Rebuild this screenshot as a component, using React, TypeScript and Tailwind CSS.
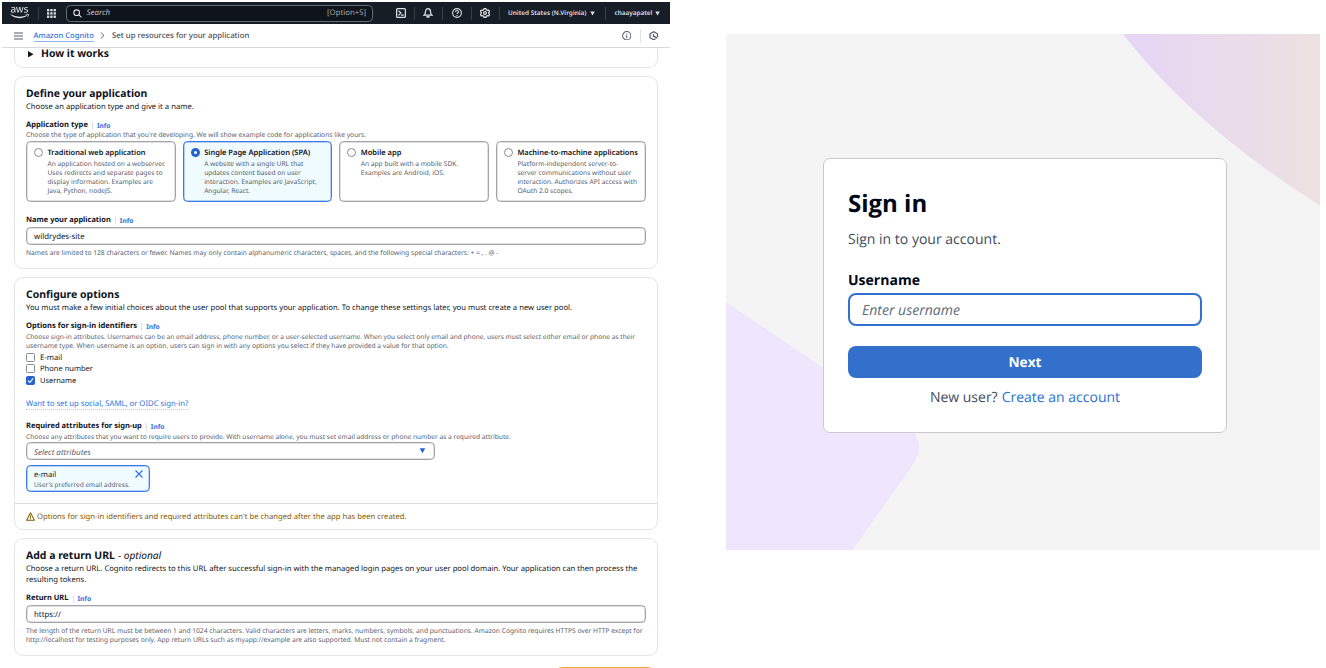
import type { ReactNode } from "react";
import { FaAws } from "react-icons/fa";

function Info() {
  return (
    <span className="ml-[4px] flex h-[8px] items-center border-l border-[#dedee3] pl-[4px] text-[6.6px] font-bold text-[#2b6fe0]">
      Info
    </span>
  );
}

function Label({ children, size = "text-[7.55px]" }: { children: ReactNode; size?: string }) {
  return (
    <div className={`flex h-[12px] items-center pt-[2px] font-bold text-[#10141c] ${size}`}>
      {children}
      <Info />
    </div>
  );
}

function Field({ children }: { children: ReactNode }) {
  return (
    <div className="flex h-[18px] w-full items-center rounded-[4.5px] border border-[#a3a3ac] pt-[4px] pl-[7px] text-[7.8px] text-[#10141c] shadow-[inset_0_0_0_0.5px_#c4c4ca]">
      {children}
    </div>
  );
}

const tiles = [
  {
    title: "Traditional web application",
    size: "text-[7.41px]",
    lines: ["An application hosted on a webserver.", "Uses redirects and separate pages to", "display information. Examples are", "Java, Python, nodeJS."],
  },
  {
    title: "Single Page Application (SPA)",
    size: "text-[7.52px]",
    selected: true,
    lines: ["A website with a single URL that", "updates content based on user", "interaction. Examples are JavaScript,", "Angular, React."],
  },
  {
    title: "Mobile app",
    size: "text-[7.5px]",
    lines: ["An app built with a mobile SDK.", "Examples are Android, iOS."],
  },
  {
    title: "Machine-to-machine applications",
    size: "text-[7.44px]",
    lines: ["Platform-independent server-to-", "server communications without user", "interaction. Authorizes API access with", "OAuth 2.0 scopes."],
  },
];

function Divider({ className }: { className: string }) {
  return <span className={`h-[13px] w-px shrink-0 bg-[#38404b] ${className}`} />;
}

function Caret({ className }: { className: string }) {
  return (
    <svg viewBox="0 0 10 9" className={className} fill="currentColor">
      <path d="M0.5 0.5h9L5 8.5z" />
    </svg>
  );
}

const ico = { fill: "none", stroke: "currentColor", strokeWidth: 2, viewBox: "0 0 16 16" } as const;

function TopNav() {
  return (
    <div className="flex h-[22px] shrink-0 items-center bg-[#161d26] text-[#dcdfe3]">
      <FaAws className="-mt-px ml-[8px] h-[15px] w-[19px] shrink-0" />
      <Divider className="ml-[8.5px]" />
      <svg viewBox="0 0 9 9" className="ml-[8.5px] h-[9px] w-[9px] shrink-0" fill="currentColor">
        {[0, 3.3, 6.6].map((y) => [0, 3.3, 6.6].map((x) => <rect key={`${x}-${y}`} x={x} y={y} width="2.3" height="2.3" />))}
      </svg>
      <div className="ml-[10px] flex h-[17px] w-[307px] shrink-0 items-center rounded-[4.5px] border border-[#646c77] bg-[#0f141a] pr-[6px] pl-[6px]">
        <svg {...ico} className="h-[9px] w-[9px]">
          <circle cx="6.5" cy="6.5" r="5" />
          <path d="M10 10l5 5" />
        </svg>
        <span className="ml-[4.5px] pt-[2px] text-[7.9px] text-[#c0c2c9] italic">Search</span>
        <span className="ml-auto pt-[2px] text-[7.77px] text-[#a5a8b0]">[Option+S]</span>
      </div>
      <svg {...ico} className="ml-[22.5px] h-[10px] w-[10px] shrink-0">
        <rect x="1" y="1" width="14" height="14" rx="1.5" />
        <path d="M4 4.5l4 3.5-4 3.5M8 11.5h4.5" />
      </svg>
      <Divider className="ml-[8px]" />
      <svg {...ico} className="ml-[8.5px] h-[10px] w-[10px] shrink-0">
        <path d="M1.5 11.5c2.200-1.600 2.500-3.300 2.500-5.500C4 3.400 5.600 1 8 1s4 2.400 4 5c0 2.200.3 3.900 2.500 5.500z" />
        <path d="M5.5 14h5" strokeWidth="3" />
      </svg>
      <Divider className="ml-[9px]" />
      <svg {...ico} className="ml-[8.5px] h-[10px] w-[10px] shrink-0" strokeWidth={1.8}>
        <circle cx="8" cy="8" r="7" />
        <path d="M5.600 6.300c0-3 4.800-3 4.800-.1C10.400 8 8 7.800 8 9.700M8 11v1.800" />
      </svg>
      <Divider className="ml-[9px]" />
      <svg {...ico} className="ml-[8.5px] h-[10px] w-[10px] shrink-0">
        <path d="M6.500 1h3l.6 2 2 .9 1.900-.5 1.300 2.300L14 7.200v1.600l1.300 1.500-1.300 2.300-1.900-.5-2 .9-.6 2h-3l-.6-2-2-.9-1.900.5-1.300-2.300L2 8.800V7.200L.7 5.700 2 3.400l1.900.5 2-.9z" />
        <circle cx="8" cy="8" r="2.300" />
      </svg>
      <Divider className="ml-[8.5px]" />
      <span className="ml-[8.5px] shrink-0 text-[6.41px] font-semibold whitespace-nowrap">United States (N.Virginia)</span>
      <Caret className="ml-[3.5px] h-[5px] w-[5px] shrink-0" />
      <Divider className="ml-[10px]" />
      <span className="ml-[8.5px] shrink-0 text-[6.41px] font-semibold">chaayapatel</span>
      <Caret className="ml-[3px] h-[5px] w-[5px] shrink-0" />
    </div>
  );
}

function Breadcrumb() {
  return (
    <div className="flex h-[24px] shrink-0 items-center border-b border-[#d9dade] text-[#555b66]">
      <svg viewBox="0 0 9 8" className="ml-[12px] h-[8px] w-[9px]" stroke="currentColor" strokeWidth="1.2">
        <path d="M0 1h9M0 4h9M0 7h9" />
      </svg>
      <span className="mt-[2px] ml-[10.5px] h-[11px] border-b border-[#8db2f0] text-[7.65px] leading-[11.5px] font-medium text-[#2b6fe0]">Amazon Cognito</span>
      <svg viewBox="0 0 5 8" className="ml-[6.5px] h-[7px] w-[5px]" fill="none" stroke="currentColor" strokeWidth="1.1">
        <path d="M0.6 0.5L4.2 4L0.6 7.5" />
      </svg>
      <span className="ml-[6.5px] pt-[3px] text-[7.82px] font-medium text-[#4a505c]">Set up resources for your application</span>
      <svg {...ico} className="ml-auto h-[9.5px] w-[9.5px]" strokeWidth={1.7}>
        <circle cx="8" cy="8" r="7" />
        <path d="M8 7v5M8 4v1.8" />
      </svg>
      <span className="ml-[8.5px] h-[14px] w-px bg-[#e3e4e8]" />
      <svg {...ico} className="mr-[12px] ml-[8px] h-[9.5px] w-[9.5px]" strokeWidth={2}>
        <path d="M14.3 10V4.700L8 1.200 1.700 4.700v6.600L8 14.800l3-1.700" />
        <path d="M7.5 5v3.500L14 12" />
      </svg>
    </div>
  );
}

const card = "mx-[12px] shrink-0 rounded-[9px] border border-[#e4e5e9] bg-white";
const heading = "flex items-center font-bold text-[#0f141a]";
const hint = "text-[6.68px] text-[#5b616e]";

function Checkbox({ label, size, checked }: { label: string; size: string; checked?: boolean }) {
  return (
    <div className="flex h-[11.5px] items-center">
      <span className={`flex h-[9px] w-[9px] items-center justify-center rounded-[1.5px] border ${checked ? "border-[#2563d0] bg-[#2563d0]" : "border-[#868b98] bg-white"}`}>
        {checked && (
          <svg viewBox="0 0 8 8" className="h-[7px] w-[7px]" fill="none" stroke="white" strokeWidth="1.3">
            <path d="M1 4.2L3.2 6.3L7 1.6" />
          </svg>
        )}
      </span>
      <span className={`ml-[5px] pt-[2px] text-[#10141c] ${size}`}>{label}</span>
    </div>
  );
}

function Console() {
  return (
    <div className="mt-[2px] ml-[2px] flex h-[666px] w-[668px] shrink-0 flex-col overflow-hidden bg-white font-['Noto_Sans',sans-serif] whitespace-nowrap">
      <TopNav />
      <Breadcrumb />
      <div className="mx-[12px] flex h-[20px] shrink-0 items-start rounded-b-[9px] border border-t-0 border-[#e4e5e9] pl-[13px]">
        <svg viewBox="0 0 6 7" className="mt-[2.5px] h-[6.5px] w-[5.5px]" fill="#0f141a">
          <path d="M0 0l6 3.5L0 7z" />
        </svg>
        <span className="ml-[7.5px] text-[10.42px] leading-[13px] font-bold text-[#0f141a]">How it works</span>
      </div>

      <div className={`${card} mt-[8px] h-[193px] pt-[10px] pr-[11.5px] pl-[11px]`}>
        <div className={`${heading} h-[13px] pt-[2px] text-[10.42px]`}>Define your application</div>
        <div className="flex h-[12px] items-center pt-[3px] text-[7.68px] text-[#10141c]">Choose an application type and give it a name.</div>
        <div className="mt-[6px] pt-px"><Label size="text-[7.59px]">Application type</Label></div>
        <div className={`${hint} flex h-[8px] items-center pt-px`}>
          Choose the type of application that you're developing. We will show example code for applications like yours.
        </div>
        <div className="mt-[2px] grid h-[61px] grid-cols-4 gap-[7px]">
          {tiles.map((t) => (
            <div
              key={t.title}
              className={`flex items-start rounded-[4.5px] border pt-[5px] pl-[7px] ${t.selected ? "border-[#3b79e4] bg-[#f0fbff] shadow-[inset_0_0_0_0.5px_#7ba6ee]" : "border-[#a3a3ac] shadow-[inset_0_0_0_0.5px_#c4c4ca]"}`}
            >
              <span className={`mt-px h-[9px] w-[9px] shrink-0 rounded-full bg-white ${t.selected ? "border-[3px] border-[#2563d0]" : "border border-[#868b98]"}`} />
              <div className="ml-[4.5px]">
                <div className={`h-[11px] leading-[13px] font-semibold text-[#10141c] ${t.size}`}>{t.title}</div>
                <div className="pt-[0.5px] text-[6.64px] leading-[9.1px] text-[#565c69]">
                  {t.lines.map((l) => (
                    <div key={l}>{l}</div>
                  ))}
                </div>
              </div>
            </div>
          ))}
        </div>
        <div className="mt-[12px] mb-px"><Label size="text-[7.46px]">Name your application</Label></div>
        <Field>wildrydes-site</Field>
        <div className={`${hint} mt-[3px] flex h-[9px] items-center pt-[2px]`}>
          Names are limited to 128 characters or fewer. Names may only contain alphanumeric characters, spaces, and the following special characters: + = , . @ -
        </div>
      </div>

      <div className={`${card} mt-[8px] h-[253px]`}>
        <div className="h-[225px] px-[11px] pt-[10px]">
          <div className={`${heading} h-[13px] pt-[2px] text-[10.46px]`}>Configure options</div>
          <div className="mt-px flex h-[12px] items-center pt-[2px] text-[7.69px] text-[#10141c]">
            You must make a few initial choices about the user pool that supports your application. To change these settings later, you must create a new user pool.
          </div>
          <div className="mt-[6px]"><Label size="text-[7.59px]">Options for sign-in identifiers</Label></div>
          <div className="text-[6.62px] leading-[9.3px] text-[#5b616e]">
            <div>Choose sign-in attributes. Usernames can be an email address, phone number, or a user-selected username. When you select only email and phone, users must select either email or phone as their</div>
            <div className="text-[6.66px]">username type. When username is an option, users can sign in with any options you select if they have provided a value for that option.</div>
          </div>
          <div className="mt-[1px]">
            <Checkbox label="E-mail" size="text-[7.7px]" />
            <Checkbox label="Phone number" size="text-[7.54px]" />
            <Checkbox label="Username" size="text-[7.45px]" checked />
          </div>
          <div className="mt-[11px] flex h-[12px] items-center pt-px">
            <span className="border-b border-dotted border-[#b8cdf5] pt-px text-[7.73px] leading-[10px] text-[#2b6fe0]">Want to set up social, SAML, or OIDC sign-in?</span>
          </div>
          <div className="mt-[11px]"><Label size="text-[7.51px]">Required attributes for sign-up</Label></div>
          <div className="flex h-[9px] items-center text-[6.62px] text-[#5b616e]">
            Choose any attributes that you want to require users to provide. With username alone, you must set email address or phone number as a required attribute.
          </div>
          <div className="mt-px flex h-[18px] w-[409px] items-center rounded-[4.5px] border border-[#a3a3ac] pr-[8px] pl-[7px] shadow-[inset_0_0_0_0.5px_#c4c4ca]">
            <span className="pt-[3px] text-[7.98px] text-[#5b616e] italic">Select attributes</span>
            <Caret className="ml-auto h-[5.5px] w-[7px] text-[#2563d0]" />
          </div>
          <div className="mt-[5px] flex h-[27px] w-[123.5px] items-start rounded-[4.5px] border border-[#3b79e4] bg-[#f0fbff] pr-[5.5px] pl-[7px] shadow-[inset_0_0_0_0.5px_#7ba6ee]">
            <div>
              <div className="mt-[4px] text-[7.7px] leading-[10px] text-[#10141c]">e-mail</div>
              <div className="text-[6.53px] leading-[9px] text-[#5b616e]">User's preferred email address.</div>
            </div>
            <svg viewBox="0 0 8 8" className="mt-[4px] ml-auto h-[8px] w-[8px]" stroke="#2b6fe0" strokeWidth="1.1">
              <path d="M0.5 0.5l7 7M7.5 0.5l-7 7" />
            </svg>
          </div>
        </div>
        <div className="flex h-[26px] items-center border-t border-[#dcdde2] pl-[11px] text-[#855900]">
          <svg {...ico} className="h-[9px] w-[9px]" strokeWidth={1.8}>
            <path d="M8 1.5L15 14.5H1z" strokeLinejoin="round" />
            <path d="M8 6v4M8 11.2v1.6" />
          </svg>
          <span className="ml-[2px] pt-[2px] text-[7.68px]">Options for sign-in identifiers and required attributes can't be changed after the app has been created.</span>
        </div>
      </div>

      <div className={`${card} mt-[8px] h-[118px] pt-[10px] pr-[11.5px] pl-[11px]`}>
        <div className="flex h-[12px] items-baseline text-[10.46px] leading-[13px] font-bold text-[#0f141a]">
          Add a return URL<span className="ml-[3px] text-[10.15px] font-normal italic">- optional</span>
        </div>
        <div className="mt-[2.5px] text-[7.68px] leading-[11.2px] text-[#10141c]">
          <div>Choose a return URL. Cognito redirects to this URL after successful sign-in with the managed login pages on your user pool domain. Your application can then process the</div>
          <div>resulting tokens.</div>
        </div>
        <div className="mt-[6px] mb-px"><Label size="text-[7.5px]">Return URL</Label></div>
        <Field>https://</Field>
        <div className="mt-[3px] text-[6.67px] leading-[9.3px] text-[#5b616e]">
          <div>The length of the return URL must be between 1 and 1024 characters. Valid characters are letters, marks, numbers, symbols, and punctuations. Amazon Cognito requires HTTPS over HTTP except for</div>
          <div>http://localhost for testing purposes only. App return URLs such as myapp://example are also supported. Must not contain a fragment.</div>
        </div>
      </div>
      <div className="mt-[11px] mr-[12px] h-[22px] w-[106px] shrink-0 self-end rounded-[11px] bg-[#f0a52e]" />
    </div>
  );
}

function SignIn() {
  return (
    <div className="relative mt-[34px] ml-[56px] h-[516px] w-[594px] shrink-0 bg-[#f4f4f4] pt-[124px] font-['Open_Sans',sans-serif]">
      <svg className="absolute inset-0" width="594" height="516" viewBox="0 0 594 516">
        <defs>
          <linearGradient id="blob" gradientUnits="userSpaceOnUse" x1="397" y1="0" x2="594" y2="0">
            <stop offset="0" stopColor="#e7d5f6" />
            <stop offset="1" stopColor="#ede1e0" />
          </linearGradient>
        </defs>
        <path d="M397 0Q469 93 594 171.5V0z" fill="url(#blob)" />
        <path d="M0 268L97.6 334L172 384C191 397 199 411 188 429L126.6 516H0z" fill="#efe5fd" />
      </svg>
      <div className="relative ml-[97px] h-[275px] w-[404px] rounded-[7px] border border-[#c8cacd] bg-white px-[24px] pt-[26px] whitespace-nowrap">
        <div className="flex h-[36px] items-center pt-[2px] text-[24px] font-bold text-[#000716]">Sign in</div>
        <div className="mt-[7px] flex h-[22px] items-center pt-px text-[14.03px] text-[#414d5c]">Sign in to your account.</div>
        <div className="mt-[20px] flex h-[20px] items-center pt-px text-[14.03px] font-bold text-[#000716]">Username</div>
        <div className="mt-[3px] flex h-[33px] items-center rounded-[8px] border-2 border-[#3271cf] pt-[2px] pl-[12px] text-[14.03px] text-[#5f6b7a] italic">Enter username</div>
        <div className="mt-[20px] flex h-[32px] items-center justify-center rounded-[8px] bg-[#3270cb] pt-[2px] text-[13.7px] font-bold text-white">Next</div>
        <div className="mt-[8.5px] flex h-[22px] items-center justify-center gap-[4px] text-[14px] text-[#414d5c]">
          New user? <span className="text-[#2b6fd0]">Create an account</span>
        </div>
      </div>
    </div>
  );
}

export default function App() {
  return (
    <div className="flex h-[668px] w-[1326px] items-start overflow-hidden bg-white [text-rendering:geometricPrecision]">
      <Console />
      <SignIn />
    </div>
  );
}
